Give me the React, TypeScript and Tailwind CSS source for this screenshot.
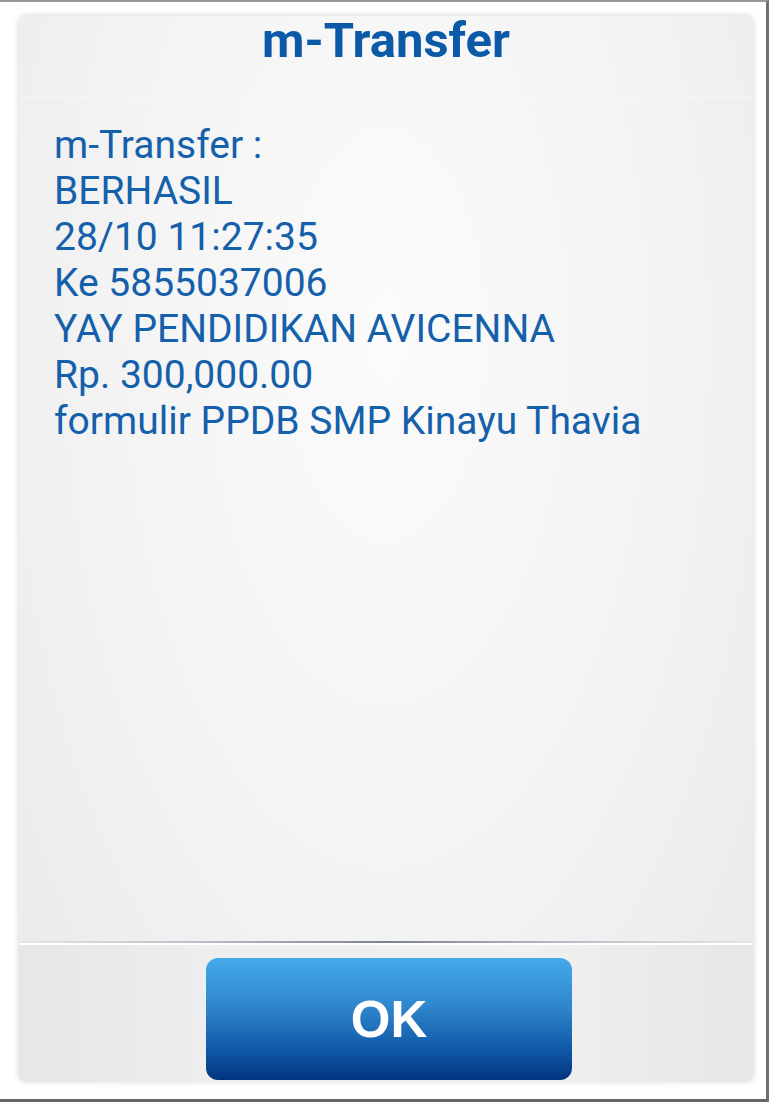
import React from "react";

export default function App() {
  const lines = [
    "m-Transfer :",
    "BERHASIL",
    "28/10 11:27:35",
    "Ke 5855037006",
    "YAY PENDIDIKAN AVICENNA",
    "Rp. 300,000.00",
    "formulir PPDB SMP Kinayu Thavia",
  ];
  return (
    <div className="w-[769px] h-[1102px] bg-white border-t-2 border-t-[#9a9a9a] border-r-[3px] border-r-[#707070] border-b-[3px] border-b-[#666666] pl-[19px] pr-[13px] pt-[14px] pb-[18px]">
      <div className="h-full flex flex-col rounded-[6px] shadow-[0_0_6px_rgba(0,0,0,0.18)] bg-[radial-gradient(ellipse_at_50%_30%,#fbfbfb_0%,#f3f3f3_55%,#e9e9e9_100%)]">
        <div className="h-[82px] shrink-0 flex justify-center border-b border-b-[#f7f7f7]">
          <div
            className="text-[49px] leading-[50px] font-bold text-[#0b5aa7]"
            style={{ fontFamily: "Roboto, 'Noto Sans', sans-serif" }}
          >
            m-Transfer
          </div>
        </div>
        <div
          className="flex-1 pl-[35px] pt-[24px] text-[39px] leading-[46px] text-[#1460aa]"
          style={{ fontFamily: "Roboto, 'Noto Sans', sans-serif" }}
        >
          {lines.map((l) => (
            <div key={l} className="whitespace-nowrap">{l}</div>
          ))}
        </div>
        <div className="h-[2px] shrink-0 bg-[linear-gradient(90deg,#e4e6ea_0%,#b9bec7_25%,#7b8390_50%,#b9bec7_75%,#e4e6ea_100%)]" />
        <div className="h-[2px] shrink-0 bg-white" />
        <div className="h-[136px] shrink-0 flex justify-center pt-[13px] pl-[6px] rounded-b-[6px] bg-[linear-gradient(90deg,#e6e6e6_0%,#efefef_30%,#f0f0f0_70%,#e6e6e6_100%)]">
          <div className="w-[366px] h-[122px] rounded-[12px] bg-[linear-gradient(180deg,#44a9ea_0%,#2f86cc_40%,#1058a8_75%,#01357f_100%)] flex items-center justify-center">
            <span
              className="text-[51px] font-bold text-white leading-none"
              style={{ fontFamily: "'Liberation Sans', Arial, sans-serif" }}
            >
              OK
            </span>
          </div>
        </div>
      </div>
    </div>
  );
}
